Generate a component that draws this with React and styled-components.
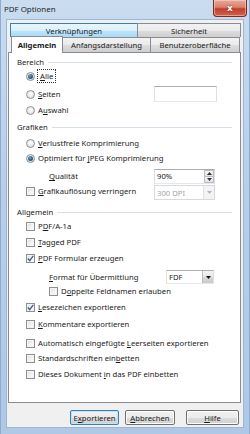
import React from "react";
import styled, { createGlobalStyle, css } from "styled-components";

const Global = createGlobalStyle`
  html, body { margin: 0; padding: 0; }
  body { font-family: "Noto Sans", "Open Sans", sans-serif; font-size: 7.7px; color: #1b1b1b; }
  * { box-sizing: border-box; }
`;

const Window = styled.div`
  width: 250px;
  height: 434px;
  display: flex;
  flex-direction: column;
  background: linear-gradient(180deg, #c9dcf0 0%, #b7cfe9 40%, #aec8e5 100%);
  box-shadow: inset 1px 0 0 #8eabcf, inset -1px 0 0 #8eabcf;
`;

const TitleBar = styled.div`
  height: 19px;
  display: flex;
  align-items: flex-start;
  padding-left: 4px;
  flex: none;
`;

const TitleText = styled.div`
  flex: 1;
  line-height: 19px;
  font-size: 7.9px;
  color: #1e1e1e;
`;

const CloseButton = styled.div`
  width: 34px;
  height: 17px;
  margin-right: 3px;
  border: 1px solid #7a2c1f;
  border-top: none;
  border-radius: 0 0 4px 4px;
  background: linear-gradient(180deg, #e9a99a 0%, #d9806c 45%, #c2402a 55%, #d2614a 100%);
  box-shadow: inset 0 0 0 1px rgba(255, 220, 210, 0.5);
  display: flex;
  align-items: center;
  justify-content: center;
  color: #fff;
  font-family: "DejaVu Sans", sans-serif;
  font-weight: bold;
  font-size: 9px;
  text-shadow: 0 0 2px #6d1c10;
`;

const Client = styled.div`
  flex: none;
  height: 409px;
  margin: 0 6px;
  background: #f0f0f0;
  border: 1px solid #9fb6d0;
  padding: 3px 2px 0 1px;
  display: flex;
  flex-direction: column;
`;

const TabRow = styled.div`
  display: flex;
  align-items: flex-end;
  height: ${(p) => p.h}px;
  padding-left: ${(p) => p.pl}px;
  flex: none;
`;

const Tab = styled.div`
  width: ${(p) => p.w}px;
  height: ${(p) => p.h}px;
  margin-left: -1px;
  border: 1px solid #898c95;
  border-bottom: none;
  display: flex;
  align-items: center;
  justify-content: center;
  white-space: nowrap;
  color: #1b1b1b;
  background: linear-gradient(180deg, #f2f2f2 0%, #ebebeb 50%, #dddddd 51%, #cfcfcf 100%);
  &:first-child { margin-left: 0; }
  ${(p) =>
    p.hot &&
    css`
      border-color: #3c7fb1;
      background: linear-gradient(180deg, #eaf6fd 0%, #d9f0fc 50%, #bee6fd 51%, #a7d9f5 100%);
    `}
  ${(p) =>
    p.active &&
    css`
      position: relative;
      z-index: 1;
      margin-bottom: -1px;
      background: #ffffff;
      font-weight: bold;
    `}
`;

const Panel = styled.div`
  flex: none;
  width: 233px;
  height: 351px;
  background: #ffffff;
  border: 1px solid #898c95;
  padding: 0 8px 0 8px;
  display: flex;
  flex-direction: column;
`;

const Header = styled.div`
  display: flex;
  align-items: center;
  height: 14px;
  margin-top: ${(p) => p.mt || 0}px;
  gap: 4px;
  &::after {
    content: "";
    flex: 1;
    height: 1px;
    background: #d5dfe5;
  }
`;

const Row = styled.div`
  display: flex;
  align-items: center;
  height: 14px;
  margin-top: ${(p) => p.mt || 0}px;
  padding-left: ${(p) => p.indent || 0}px;
  white-space: nowrap;
`;

const Label = styled.span`
  margin-left: ${(p) => p.gap ?? 3}px;
  ${(p) =>
    p.focus &&
    css`
      outline: 1px dotted #333;
      outline-offset: 1px;
      margin-left: 4px;
      padding: 0 1px;
      line-height: 10px;
    `}
`;

const U = styled.span`
  text-decoration: underline;
  text-decoration-thickness: 1px;
  text-underline-offset: 1px;
`;

const RadioCircle = styled.span`
  flex: none;
  width: 9px;
  height: 9px;
  border-radius: 50%;
  border: 1px solid #8e8f8f;
  background: radial-gradient(circle at 50% 40%, #ffffff 0%, #f0f0f0 40%, #cfd0d2 100%);
  display: flex;
  align-items: center;
  justify-content: center;
  &::after {
    content: "";
    width: 5px;
    height: 5px;
    border-radius: 50%;
    display: ${(p) => (p.on ? "block" : "none")};
    background: radial-gradient(circle at 40% 35%, #6fa6cf 0%, #2a6494 50%, #113a5e 100%);
  }
`;

const CheckBox = styled.span`
  flex: none;
  width: 9px;
  height: 9px;
  border: 1px solid #8e8f8f;
  background: linear-gradient(135deg, #dcdcdc 0%, #f4f4f4 60%, #ffffff 100%);
  box-shadow: inset 0 0 0 1px #f4f4f4;
  display: flex;
  align-items: center;
  justify-content: center;
`;

const Check = () => (
  <svg width="7" height="7" viewBox="0 0 7 7">
    <path d="M0.8 3.6 L2.7 5.6 L6.3 0.9" fill="none" stroke="#4c5f8f" strokeWidth="1.4" />
  </svg>
);

const Radio = ({ on, children, focus, mt, indent }) => (
  <Row mt={mt} indent={indent}>
    <RadioCircle on={on} />
    <Label focus={focus}>{children}</Label>
  </Row>
);

const Field = styled.div`
  flex: none;
  margin-left: auto;
  margin-right: ${(p) => p.mr}px;
  width: ${(p) => p.w}px;
  height: ${(p) => p.h}px;
  margin-top: ${(p) => p.dy || 0}px;
  border: 1px solid ${(p) => (p.disabled ? "#d9d9d9" : "#abadb3")};
  border-left-color: ${(p) => (p.disabled ? "#d9d9d9" : "#dbdfe6")};
  border-right-color: ${(p) => (p.disabled ? "#d9d9d9" : "#dbdfe6")};
  border-bottom-color: ${(p) => (p.disabled ? "#d9d9d9" : "#e3e9ef")};
  background: #ffffff;
  display: flex;
  align-items: center;
  color: ${(p) => (p.disabled ? "#a3a3a3" : "#1b1b1b")};
`;

const FieldText = styled.span`
  flex: 1;
  padding-left: 2px;
`;

const SpinCol = styled.div`
  width: 10px;
  height: 100%;
  display: flex;
  flex-direction: column;
`;

const SpinBtn = styled.div`
  flex: 1;
  border: 1px solid #b8bcc4;
  border-top: ${(p) => (p.down ? "none" : "1px solid #b8bcc4")};
  background: linear-gradient(180deg, #f6f6f6, #e2e2e2);
  display: flex;
  align-items: center;
  justify-content: center;
`;

const Arrow = ({ up, color = "#333" }) => (
  <svg width="5" height="3" viewBox="0 0 5 3">
    <path d={up ? "M0 3 L2.5 0 L5 3 Z" : "M0 0 L5 0 L2.5 3 Z"} fill={color} />
  </svg>
);

const DropBtn = styled.div`
  width: 11px;
  height: 100%;
  border-left: 1px solid ${(p) => (p.disabled ? "#e2e2e2" : "#b8bcc4")};
  background: ${(p) =>
    p.disabled ? "#f4f4f4" : "linear-gradient(180deg, #f2f2f2 0%, #e6e6e6 50%, #d6d6d6 51%, #cccccc 100%)"};
  display: flex;
  align-items: center;
  justify-content: center;
`;

const Footer = styled.div`
  display: flex;
  justify-content: flex-end;
  align-items: flex-start;
  padding-top: 7px;
  padding-right: 2px;
`;

const Button = styled.div`
  width: ${(p) => p.w}px;
  height: 15px;
  margin-left: ${(p) => p.ml}px;
  border: 1px solid ${(p) => (p.primary ? "#3c7fb1" : "#707070")};
  border-radius: 2px;
  background: linear-gradient(180deg, #f2f2f2 0%, #ebebeb 50%, #dddddd 51%, #cfcfcf 100%);
  box-shadow: inset 0 0 0 1px ${(p) => (p.primary ? "#bfe3f7" : "#fcfcfc")};
  display: flex;
  align-items: center;
  justify-content: center;
  color: #1b1b1b;
`;

const Item = ({ checked, children, mt, indent }) => (
  <Row mt={mt} indent={indent}>
    <CheckBox>{checked && <Check />}</CheckBox>
    <Label>{children}</Label>
  </Row>
);

export default function App() {
  return (
    <Window>
      <Global />
      <TitleBar>
        <TitleText>PDF Optionen</TitleText>
        <CloseButton>x</CloseButton>
      </TitleBar>
      <Client>
        <TabRow h={14} pl={2}>
          <Tab w={128} h={14} hot>Verknüpfungen</Tab>
          <Tab w={104} h={14}>Sicherheit</Tab>
        </TabRow>
        <TabRow h={15} pl={3}>
          <Tab w={52} h={17} active>Allgemein</Tab>
          <Tab w={89} h={15}>Anfangsdarstellung</Tab>
          <Tab w={90} h={15}>Benutzeroberfläche</Tab>
        </TabRow>
        <Panel>
          <Header mt={2}>Bereich</Header>
          <Row mt={0} indent={9}>
            <RadioCircle on />
            <Label focus><U>A</U>lle</Label>
          </Row>
          <Row mt={4} indent={9}>
            <RadioCircle />
            <Label><U>S</U>eiten</Label>
            <Field w={63} h={16} mr={15} />
          </Row>
          <Radio mt={2} indent={9}>A<U>u</U>swahl</Radio>

          <Header mt={3}>Grafiken</Header>
          <Radio mt={2} indent={9}><U>V</U>erlustfreie Komprimierung</Radio>
          <Radio mt={1} indent={9} on>Optimiert für <U>J</U>PEG Komprimierung</Radio>
          <Row mt={4} indent={32}>
            <span><U>Q</U>ualität</span>
            <Field w={61} h={15} mr={17}>
              <FieldText>90%</FieldText>
              <SpinCol>
                <SpinBtn><Arrow up /></SpinBtn>
                <SpinBtn down><Arrow /></SpinBtn>
              </SpinCol>
            </Field>
          </Row>
          <Row mt={1} indent={9}>
            <CheckBox />
            <Label><U>G</U>rafikauflösung verringern</Label>
            <Field w={61} h={15} mr={17} dy={3} disabled>
              <FieldText>300 DPI</FieldText>
              <DropBtn disabled><Arrow color="#b5b5b5" /></DropBtn>
            </Field>
          </Row>

          <Header mt={7}>Allgemein</Header>
          <Item mt={0} indent={9}>P<U>D</U>F/A-1a</Item>
          <Item mt={2} indent={9}><U>T</U>agged PDF</Item>
          <Item mt={2} indent={9} checked><U>P</U>DF Formular erzeugen</Item>
          <Row mt={5} indent={32}>
            <span><U>F</U>ormat für Übermittlung</span>
            <Field w={48} h={14} mr={18}>
              <FieldText>FDF</FieldText>
              <DropBtn><Arrow color="#111" /></DropBtn>
            </Field>
          </Row>
          <Item mt={0} indent={32}>D<U>o</U>ppelte Feldnamen erlauben</Item>
          <Item mt={2} indent={9} checked><U>L</U>esezeichen exportieren</Item>
          <Item mt={3} indent={9}><U>K</U>ommentare exportieren</Item>
          <Item mt={5} indent={9}>Automatisch eingefügte <U>L</U>eerseiten exportieren</Item>
          <Item mt={1} indent={9}>Standardschriften ein<U>b</U>etten</Item>
          <Item mt={2} indent={9}>Dieses Dokument <U>i</U>n das PDF einbetten</Item>
        </Panel>
        <Footer>
          <Button w={49} ml={0} primary>E<U>x</U>portieren</Button>
          <Button w={50} ml={6}><U>A</U>bbrechen</Button>
          <Button w={53} ml={11}><U>H</U>ilfe</Button>
        </Footer>
      </Client>
    </Window>
  );
}
